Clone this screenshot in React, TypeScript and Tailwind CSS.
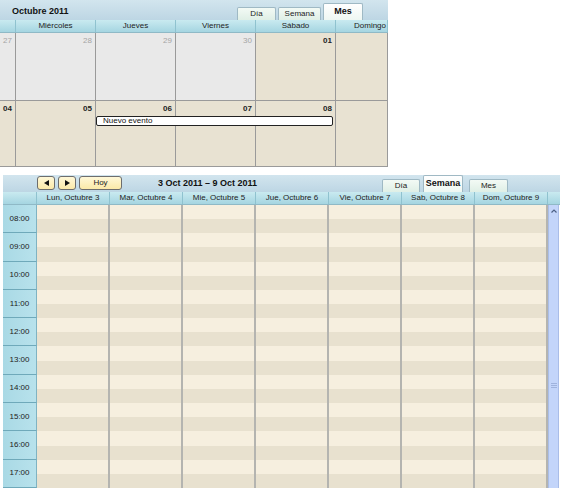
import React from 'react';

const font = { fontFamily: '"Liberation Sans", Arial, sans-serif' };

const monthCols = ['', 'Miércoles', 'Jueves', 'Viernes', 'Sábado', 'Domingo'];

type Cell = { n: string; other?: boolean; bold?: boolean };

const monthRows: Cell[][] = [
  [{ n: '27', other: true }, { n: '28', other: true }, { n: '29', other: true }, { n: '30', other: true }, { n: '01', bold: true }, { n: '' }],
  [{ n: '04', bold: true }, { n: '05', bold: true }, { n: '06', bold: true }, { n: '07', bold: true }, { n: '08', bold: true }, { n: '' }],
];

const weekDays = [
  'Lun, Octubre 3',
  'Mar, Octubre 4',
  'Mie, Octubre 5',
  'Jue, Octubre 6',
  'Vie, Octubre 7',
  'Sab, Octubre 8',
  'Dom, Octubre 9',
];

const hours = ['08:00', '09:00', '10:00', '11:00', '12:00', '13:00', '14:00', '15:00', '16:00', '17:00'];

function Tab({ label, active }: { label: string; active?: boolean }) {
  if (active) {
    return (
      <div className="h-[17px] w-[40px] flex items-center justify-center border border-b-0 border-[#9fb9c4] rounded-t-[2px] bg-gradient-to-b from-[#ffffff] to-[#eef7f2] text-[9px] font-bold text-[#111]">
        {label}
      </div>
    );
  }
  return (
    <div className="h-[13px] flex items-center justify-center border border-b-0 border-[#9fb9c4] rounded-t-[2px] bg-gradient-to-b from-[#f3faf5] to-[#dfefe6] text-[8px] text-[#222]">
      {label}
    </div>
  );
}

function MonthView() {
  return (
    <div className="w-[388px]" style={font}>
      <div className="h-[20px] flex items-end bg-gradient-to-b from-[#d2e5ee] to-[#bdd6e4]">
        <div className="self-center pt-[3px] pl-[12px] text-[9px] font-bold text-[#111] flex-1">Octubre 2011</div>
        <div className="flex items-end gap-[2px] pr-[25px]">
          <div className="w-[39px]"><Tab label="Día" /></div>
          <div className="w-[43px]"><Tab label="Semana" /></div>
          <Tab label="Mes" active />
        </div>
      </div>
      <div className="grid grid-cols-[16px_80px_80px_80px_80px_1fr] h-[13px] bg-gradient-to-b from-[#c9eaf0] to-[#a5d5e1] border-b border-[#8fb9c6]">
        {monthCols.map((c, i) => (
          <div
            key={i}
            className={`flex items-center text-[8px] text-[#222] border-r border-[#8fc2cf] ${i === 5 ? 'justify-end pr-[1px]' : 'justify-center'}`}
          >
            {c}
          </div>
        ))}
      </div>
      {monthRows.map((row, r) => (
        <div
          key={r}
          className={`relative grid grid-cols-[16px_80px_80px_80px_80px_1fr] border-b border-[#9a9a9a] ${r === 0 ? 'h-[68px]' : 'h-[66px]'}`}
        >
          {row.map((cell, i) => (
            <div
              key={i}
              className={`border-r border-[#9a9a9a] flex justify-end items-start pr-[3px] pt-[2px] text-[8px] ${cell.other ? 'bg-[#e9e9e9] text-[#a5a5a5]' : 'bg-[#e8e2d2] text-[#222]'} ${cell.bold ? 'font-bold' : ''} ${i === 0 ? 'pr-[1px]' : ''}`}
            >
              {cell.n}
            </div>
          ))}
          {r === 1 && (
            <div className="absolute left-[96px] top-[15px] w-[237px] h-[10px] bg-white border border-[#222] rounded-[2px] flex items-center pl-[6px] text-[8px] text-[#111]">
              Nuevo evento
            </div>
          )}
        </div>
      ))}
    </div>
  );
}

function NavButton({ children, wide }: { children: React.ReactNode; wide?: boolean }) {
  return (
    <div
      className={`h-[14px] ${wide ? 'w-[43px]' : 'w-[18px]'} flex items-center justify-center rounded-[3px] border border-[#6d6d6d] bg-gradient-to-b from-[#fff8d8] to-[#fbe9a8] text-[8px] text-[#222]`}
    >
      {children}
    </div>
  );
}

function WeekView() {
  return (
    <div className="ml-[3px] w-[557px]" style={font}>
      <div className="h-[17px] flex items-end bg-gradient-to-b from-[#d2e5ee] to-[#bdd6e4]">
        <div className="self-start pt-[1px] flex gap-[3px] pl-[34px]">
          <NavButton>
            <svg width="5" height="6" viewBox="0 0 5 6"><path d="M5 0 L0 3 L5 6 Z" fill="#111" /></svg>
          </NavButton>
          <NavButton>
            <svg width="5" height="6" viewBox="0 0 5 6"><path d="M0 0 L5 3 L0 6 Z" fill="#111" /></svg>
          </NavButton>
          <NavButton wide>Hoy</NavButton>
        </div>
        <div className="self-center pt-[1px] pl-[36px] text-[9px] font-bold text-[#111] flex-1">3 Oct 2011 – 9 Oct 2011</div>
        <div className="flex items-end gap-[3px] pr-[52px]">
          <div className="w-[38px]"><Tab label="Día" /></div>
          <div className="w-[43px]"><Tab label="Semana" active /></div>
          <div className="w-[39px]"><Tab label="Mes" /></div>
        </div>
      </div>
      <div className="grid grid-cols-[34px_repeat(7,73px)_1fr] h-[13px] bg-gradient-to-b from-[#c9eaf0] to-[#a5d5e1] border-b border-[#8fb9c6]">
        <div className="border-r border-[#8fc2cf]" />
        {weekDays.map((d) => (
          <div key={d} className="flex items-center justify-center text-[8px] text-[#222] border-r border-[#8fc2cf]">
            {d}
          </div>
        ))}
        <div />
      </div>
      <div className="flex">
        <div className="w-[34px] flex flex-col">
          {hours.map((h) => (
            <div
              key={h}
              className="h-[28.3px] flex items-center justify-center text-[8px] text-[#222] bg-gradient-to-r from-[#a9d9e5] to-[#b8e2ec] border-b border-[#6fa9ba] border-r border-r-[#7fb3c2]"
            >
              {h}
            </div>
          ))}
        </div>
        {weekDays.map((d) => (
          <div key={d} className="w-[73px] flex flex-col border-r-2 border-[#b4b4b0]">
            {hours.map((h) => (
              <div key={h} className="h-[28.3px] flex flex-col">
                <div className="flex-1 bg-[#f6efdf]" />
                <div className="flex-1 bg-[#e8e1cf]" />
              </div>
            ))}
          </div>
        ))}
        <div className="w-[11px] bg-[#c3d5fa] border-l border-r border-[#a9bde8] flex flex-col items-center pt-[4px]">
          <svg width="6" height="4" viewBox="0 0 6 4"><path d="M0.5 3.5 L3 1 L5.5 3.5" fill="none" stroke="#4d6185" strokeWidth="1.2" /></svg>
          <div className="mt-[170px] w-[6px] flex flex-col gap-[1px]">
            <div className="h-px bg-[#9fb3dd]" />
            <div className="h-px bg-[#9fb3dd]" />
            <div className="h-px bg-[#9fb3dd]" />
          </div>
        </div>
      </div>
    </div>
  );
}

export default function App() {
  return (
    <div className="w-[569px] h-[500px] bg-white overflow-hidden">
      <MonthView />
      <div className="h-[8px]" />
      <WeekView />
    </div>
  );
}
